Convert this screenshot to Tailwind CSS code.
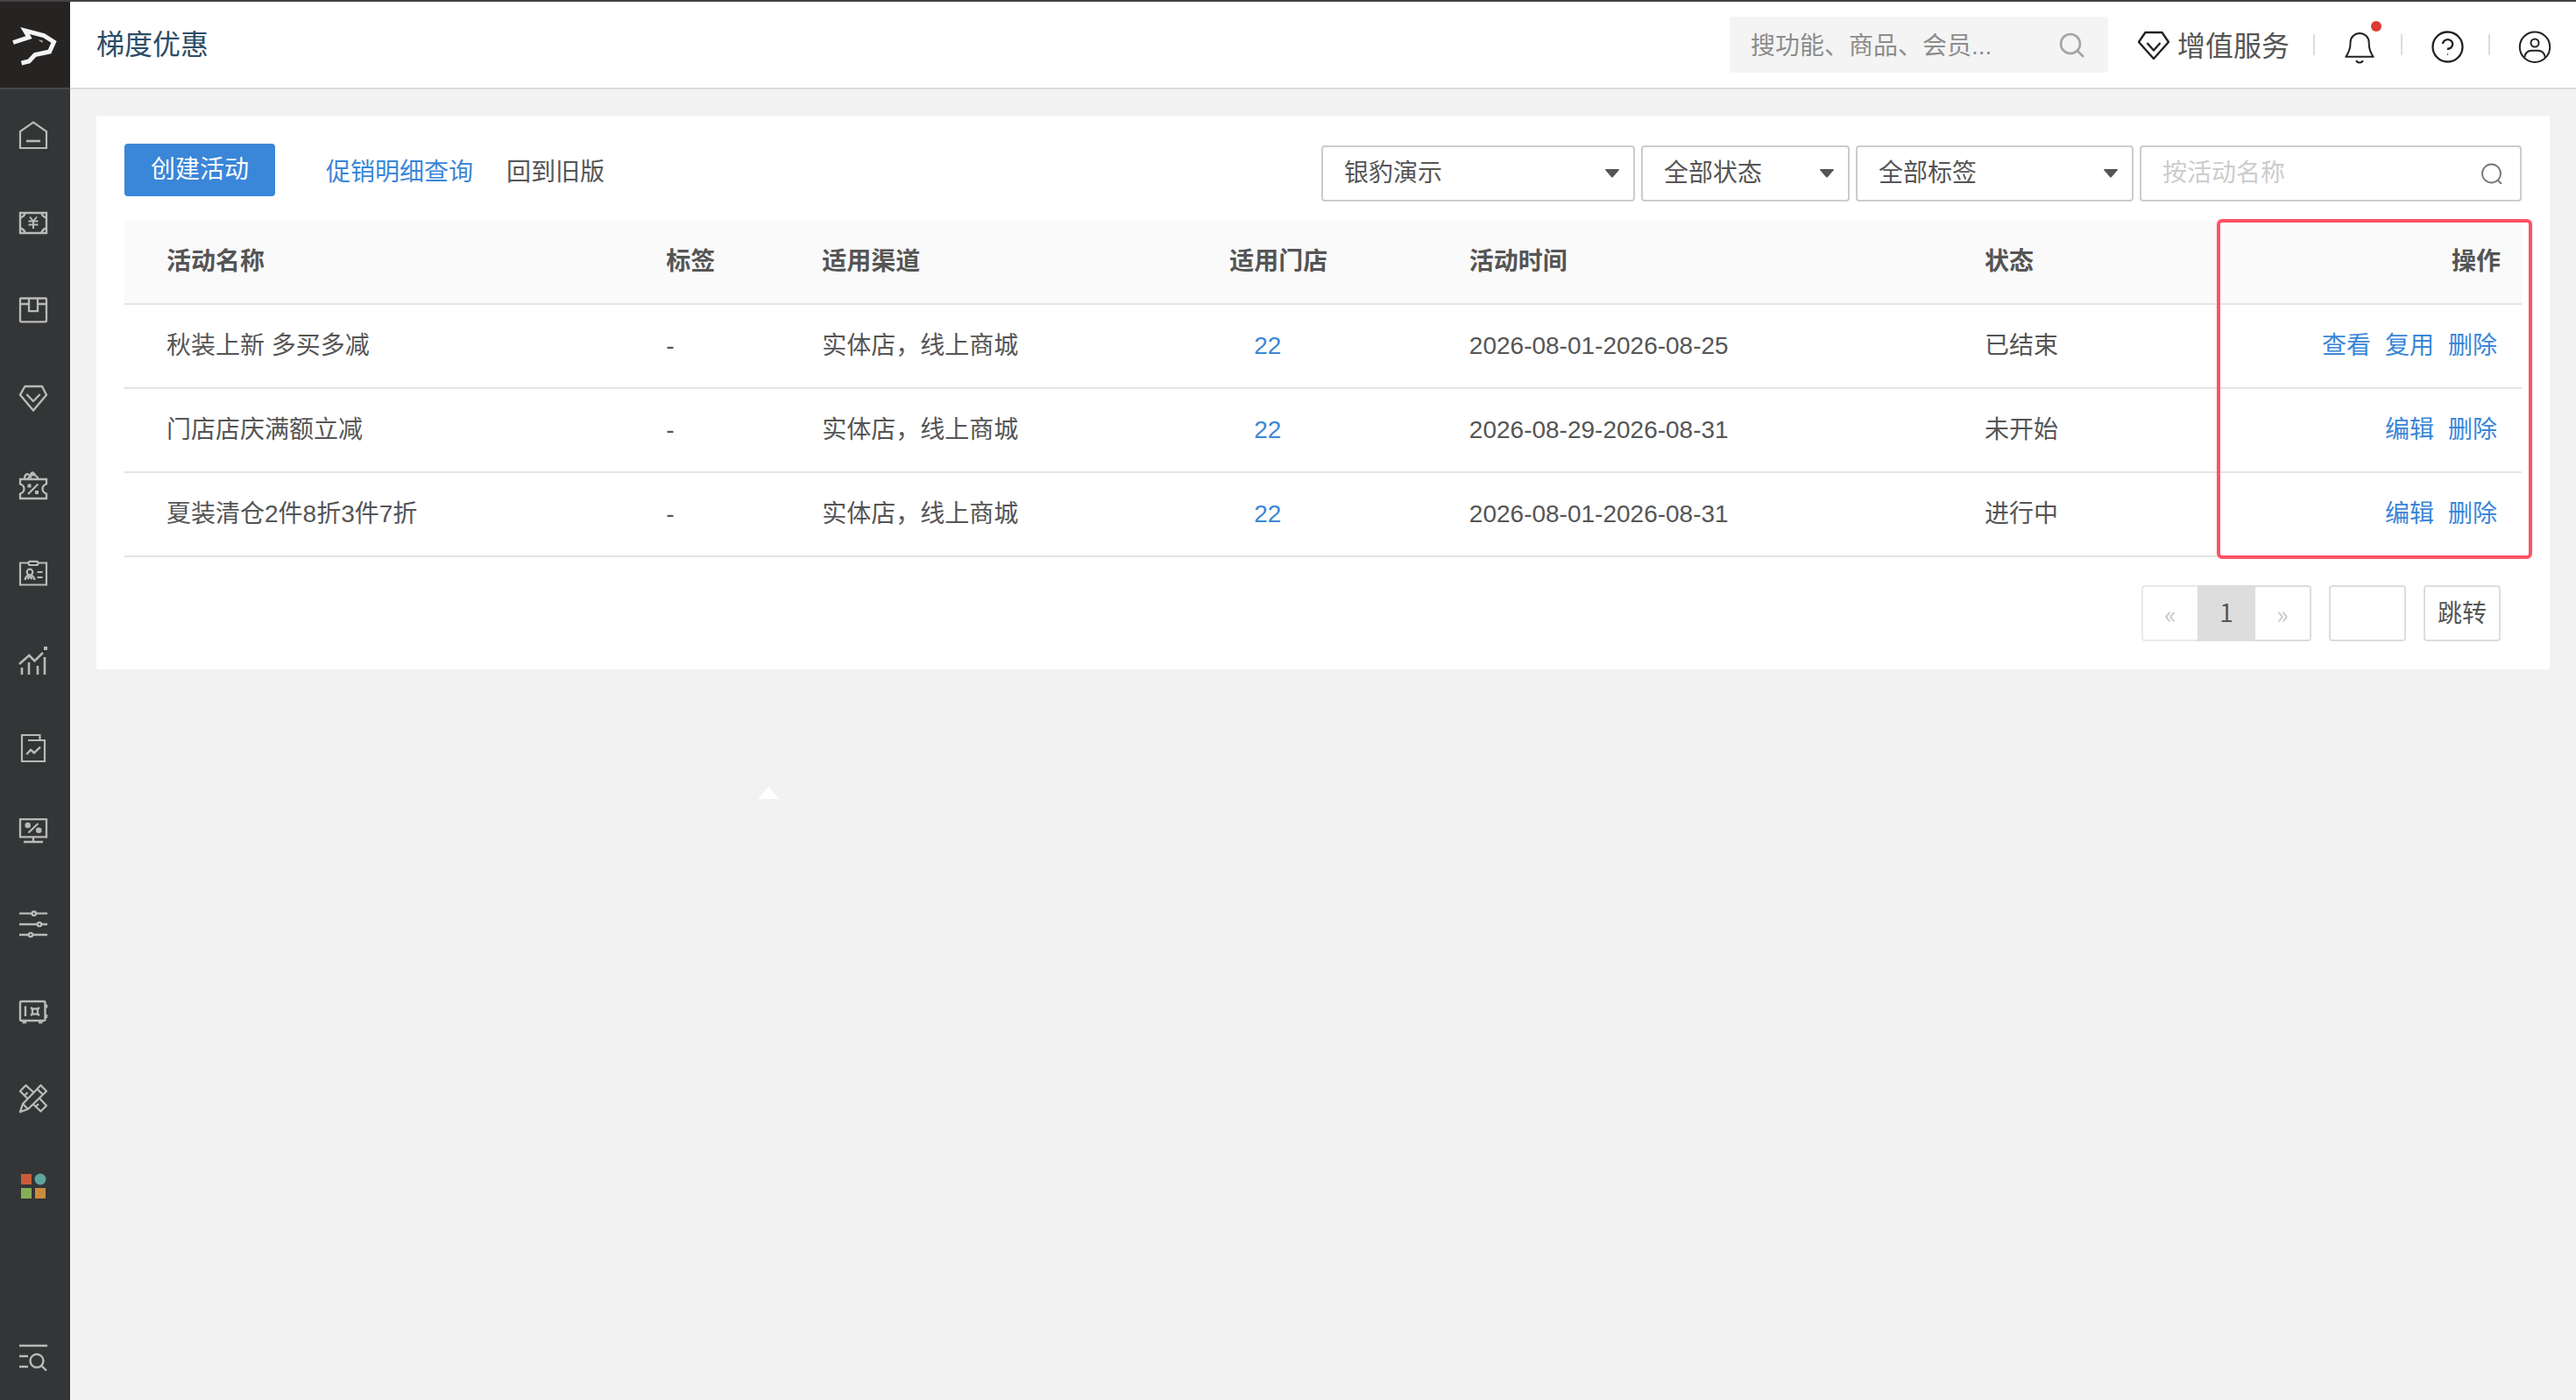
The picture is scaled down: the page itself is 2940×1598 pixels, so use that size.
<!DOCTYPE html>
<html lang="zh-CN">
<head>
  <meta charset="UTF-8">
  <meta name="viewport" content="width=device-width, initial-scale=1.0">
  <script src="https://cdn.jsdelivr.net/npm/@tailwindcss/browser@4"></script>
  <title>梯度优惠</title>
</head>
<body class="flex min-h-screen border-t-2 border-[#434142] bg-[#f2f2f2] font-['Liberation_Sans','Noto_Sans_CJK_SC',sans-serif] text-[28px] leading-[40px] text-[#555]">
  <!-- Sidebar -->
  <aside class="flex w-20 shrink-0 flex-col bg-[#343537]">
    <a href="#" aria-label="首页" class="block h-[100px] border-b-2 border-[#44484a] bg-[#262422]">
      <svg class="h-[98px] w-20" viewBox="0 2 80 98" fill="none" stroke="#f4f4f4" stroke-width="5">
        <path d="M15 48.500L33 42.500L28.500 35L50 40.500L61.500 48L56.500 59L40 62.500L33 70L24.500 72"/>
        <path d="M43.500 45.500l5 3.500v-3z" fill="#aaa" stroke="none"/>
      </svg>
    </a>
    <nav class="flex flex-col pt-[2px] pl-[18px]">
      <a href="#" aria-label="门店" class="flex h-[100px] items-center">
        <svg class="size-10" viewBox="0 0 40 40" fill="none" stroke="#b9bbb9" stroke-width="2.200">
          <path d="M5 35V16L20 5.500L35 16V35Z"/><path d="M12 27H28" stroke-width="2.600"/>
        </svg>
      </a>
      <a href="#" aria-label="收银" class="flex h-[100px] items-center">
        <svg class="size-10" viewBox="0 0 40 40" fill="none" stroke="#b9bbb9" stroke-width="2.400">
          <path d="M5 9H35V32H5Z"/>
          <path d="M10.500 9.500Q9.500 13.500 5 14.500M29.500 9.500Q30.500 13.500 35 14.500M10.500 31.500Q9.500 27.500 5 26.500M29.500 31.500Q30.500 27.500 35 26.500"/>
          <path d="M16 13.500L20 18.500L24 13.500M20 18.500V27M14.500 18.500H25.500M14.500 22.500H25.500" stroke-width="2"/>
        </svg>
      </a>
      <a href="#" aria-label="商品" class="flex h-[100px] items-center">
        <svg class="size-10" viewBox="0 0 40 40" fill="none" stroke="#b9bbb9" stroke-width="2.300">
          <rect x="5" y="6.500" width="30" height="26.800" rx="1"/>
          <path d="M5 13H15M25 13H35M15 6.500V21.200H25V6.500"/>
        </svg>
      </a>
      <a href="#" aria-label="会员" class="flex h-[100px] items-center">
        <svg class="size-10" viewBox="0 0 40 40" fill="none" stroke="#b9bbb9" stroke-width="2.400" stroke-linejoin="round">
          <path d="M10.500 7H30L35 16.700L20 34.500L5 16.700Z"/><path d="M12.300 16L20 24L27.700 16"/>
        </svg>
      </a>
      <a href="#" aria-label="营销" class="flex h-[100px] items-center">
        <svg class="size-10" viewBox="0 0 40 40" fill="none" stroke="#b9bbb9" stroke-width="2.300">
          <path d="M5 13H35V18.500Q30.500 20 30.500 24T35 29.500V35H5V29.500Q9.500 28 9.500 24T5 18.500Z"/>
          <path d="M10 12.500Q10 7.500 13.500 7Q15.500 7.500 17 10Q17 5.500 19.500 5.500Q22 7 22.500 9Q25 10 25.500 12.500M14 12Q17 7 21 8.500"/>
          <path d="M14 30L25.500 18.500"/>
          <rect x="13.500" y="18.500" width="4" height="4" fill="#b9bbb9" stroke="none"/><rect x="22" y="26" width="4" height="4" fill="#b9bbb9" stroke="none"/>
        </svg>
      </a>
      <a href="#" aria-label="员工" class="flex h-[100px] items-center">
        <svg class="size-10" viewBox="0 0 40 40" fill="none" stroke="#b9bbb9" stroke-width="2.200">
          <path d="M14 8.500H5V33.500H35V8.500H26"/>
          <rect x="14.500" y="6.800" width="11" height="4.200" rx="2"/>
          <circle cx="16" cy="19" r="3.300"/><path d="M10.500 28Q11 24 14.500 22.500M17.500 22.500Q21 24 21.500 28M13.500 27L16 23.500L18.500 27M24.500 19H30.500M24.500 25H30.500"/>
        </svg>
      </a>
      <a href="#" aria-label="数据" class="flex h-[100px] items-center">
        <svg class="size-10" viewBox="0 0 40 40" fill="none" stroke="#b9bbb9" stroke-width="2.600">
          <path d="M7 28V36M15 22V36M25 26V36M33 16V36M4 24L15.300 14L21.500 20.500L31 11"/>
          <rect x="32" y="4" width="4" height="4" fill="#b9bbb9" stroke="none"/>
        </svg>
      </a>
      <a href="#" aria-label="报表" class="flex h-[100px] items-center">
        <svg class="size-10" viewBox="0 0 40 40" fill="none" stroke="#b9bbb9" stroke-width="2.200">
          <path d="M14 11H33V35H7V5H27.500V11"/>
          <path d="M12.300 27L17 22L21 25.300L28 18.700" stroke-width="2.400"/>
        </svg>
      </a>
      <a href="#" aria-label="促销屏" class="flex h-[100px] items-center">
        <svg class="size-10" viewBox="0 0 40 40" fill="none" stroke="#b9bbb9" stroke-width="2.300">
          <path d="M5 1.200H35V21.300H5ZM20 21.500V27M9 27H31"/>
          <path d="M14.500 16.500L25.500 6"/>
          <circle cx="13.700" cy="8" r="3.300" fill="#b9bbb9" stroke="none"/><circle cx="26.300" cy="13.700" r="3.300" fill="#b9bbb9" stroke="none"/>
        </svg>
      </a>
      <a href="#" aria-label="设置" class="flex h-[100px] items-center">
        <svg class="size-10" viewBox="0 0 40 40" fill="#343537" stroke="#b9bbb9" stroke-width="2.300">
          <path d="M4 8.700H36M4 21H36M4 33H36"/>
          <circle cx="20.800" cy="8.700" r="2.200"/><circle cx="27" cy="21" r="2.200"/><circle cx="17" cy="33" r="2.200"/>
        </svg>
      </a>
      <a href="#" aria-label="钱柜" class="flex h-[100px] items-center">
        <svg class="size-10" viewBox="0 0 40 40" fill="none" stroke="#b9bbb9" stroke-width="2.400">
          <rect x="5" y="9" width="28.500" height="22" rx="1.500"/>
          <path d="M11 14.500V26M7.500 33H12M26 33H30.500M35 12.500V16.500M35 24V28"/>
          <rect x="19" y="17.500" width="6" height="6"/><path d="M17 16L19 17.500M27 16L25 17.500M17 25L19 23.500M27 25L25 23.500"/>
        </svg>
      </a>
      <a href="#" aria-label="工具" class="flex h-[100px] items-center">
        <svg class="size-10" viewBox="0 0 40 40" fill="none" stroke="#b9bbb9" stroke-width="2.300" stroke-linejoin="round">
          <path d="M28.500 4.800L35 11.500L14 32L5 35.200L8 26Z"/><path d="M8 26L14 32M24.500 9L31 15.500"/>
          <path d="M14 20.500L5 11.500L11.500 4.800L20.500 13M10.500 16L13.500 13M26.500 19L35 28L28.500 34.500L20 26.500M23 29L26 26"/>
        </svg>
      </a>
      <a href="#" aria-label="应用" class="flex h-[100px] items-center">
        <svg class="size-10" viewBox="0 0 40 40">
          <rect x="6" y="6" width="12" height="12" fill="#c95d39"/><circle cx="28" cy="12" r="6.500" fill="#5fa59a"/>
          <rect x="6" y="22" width="12" height="12" fill="#86af55"/><rect x="22" y="22" width="12" height="12" fill="#cc8b3c"/>
        </svg>
      </a>
    </nav>
    <button type="button" aria-label="搜索菜单" class="mt-auto mb-7 ml-[18px] size-10">
      <svg class="size-10" viewBox="0 0 40 40" fill="none" stroke="#b9bbb9" stroke-width="2.400">
        <path d="M4 6H36M4 18H14M4 30H14M29.500 29L35 34.500"/><circle cx="24" cy="23.300" r="7.500"/>
      </svg>
    </button>
  </aside>

  <div class="flex min-w-0 flex-1 flex-col">
    <!-- Top bar -->
    <header class="flex h-[100px] items-center border-b-2 border-[#dcdcdc] bg-white pl-[30px]">
      <h1 class="text-[32px] text-[#2c4c66]">梯度优惠</h1>
      <label class="ml-auto flex h-16 w-[432px] items-center rounded bg-[#f4f4f4] pr-[26px] pl-6">
        <input type="text" aria-label="全局搜索" placeholder="搜功能、商品、会员..." class="min-w-0 flex-1 pt-1 outline-none placeholder:text-[#8c8c8c]">
        <svg class="size-8" viewBox="0 0 32 32" fill="none" stroke="#a4a4a4" stroke-width="2.600">
          <circle cx="15" cy="15" r="11"/><path d="M23 23L30 30"/>
        </svg>
      </label>
      <a href="#" class="ml-[34px] flex items-center gap-[9px] pr-[27px] text-[32px]">
        <svg class="size-9" viewBox="0 0 36 36" fill="none" stroke="#222" stroke-width="2.400" stroke-linejoin="round">
          <path d="M8.500 4H27.500L35 15L18 34L1 15Z"/><path d="M10.500 16L18 24.500L25.500 16"/>
        </svg>
        <span class="pt-1">增值服务</span>
      </a>
      <span class="h-6 w-[2px] bg-[#dcdcdc]"></span>
      <button type="button" aria-label="消息" class="relative w-[98px] pl-[27px]">
        <svg class="size-12" viewBox="0 0 48 48" fill="none" stroke="#222" stroke-width="2">
          <path d="M8.500 37.700C11.500 33 13.500 28 13.500 23V21.500A10.600 10.600 0 0 1 34.700 21.500V23C34.700 28 36.500 33 39.500 37.700M7.500 37.700H40.500M20.300 42Q21 44.500 24 44.500T27.700 42"/>
        </svg>
        <span class="absolute -top-[3px] left-16 size-3 rounded-full bg-[#dc3a33]"></span>
      </button>
      <span class="h-6 w-[2px] bg-[#dcdcdc]"></span>
      <button type="button" aria-label="帮助" class="w-[98px] pl-[27px]">
        <svg class="size-12" viewBox="0 0 48 48" fill="none" stroke="#222" stroke-width="2.300">
          <circle cx="24.500" cy="26.500" r="17"/><path d="M19 23A5.600 5.300 0 1 1 24 28.700" stroke-width="2.400"/><circle cx="24.500" cy="35" r=".8" fill="#222" stroke="none"/>
        </svg>
      </button>
      <span class="h-6 w-[2px] bg-[#dcdcdc]"></span>
      <button type="button" aria-label="账号" class="w-[98px] pl-[27px]">
        <svg class="size-12" viewBox="0 0 48 48" fill="none" stroke="#222" stroke-width="2">
          <circle cx="24" cy="26.700" r="17.200"/><circle cx="24" cy="22" r="4.500"/><path d="M12.300 38.500C13 33 16.500 30.700 20.500 30.700H27.500C31.500 30.700 35 33 35.700 38.500"/>
        </svg>
      </button>
    </header>

    <main class="m-[30px] bg-white px-8 pb-8">
      <!-- Toolbar -->
      <div class="flex items-start pt-8 pb-[22px]">
        <button type="button" class="h-[60px] w-[172px] rounded bg-[#3a86d8] text-white">创建活动</button>
        <a href="#" class="mt-[13px] ml-[58px] text-[#3a86d8]">促销明细查询</a>
        <a href="#" class="mt-[13px] ml-[38px]">回到旧版</a>
        <form class="mt-[2px] ml-auto flex gap-[7px]">
          <label class="relative w-[358px]">
            <select aria-label="门店" class="h-16 w-full appearance-none rounded border-2 border-[#ccc] bg-white px-6">
              <option>银豹演示</option>
            </select>
            <svg class="pointer-events-none absolute top-[27px] right-[18px] h-[10px] w-4" viewBox="0 0 16 10" fill="#555"><path d="M1 0H15Q16.500 0 15.500 1.500L9 9Q8 10 7 9L.5 1.500Q-.5 0 1 0Z"/></svg>
          </label>
          <label class="relative w-[238px]">
            <select aria-label="状态" class="h-16 w-full appearance-none rounded border-2 border-[#ccc] bg-white px-6">
              <option>全部状态</option>
            </select>
            <svg class="pointer-events-none absolute top-[27px] right-[18px] h-[10px] w-4" viewBox="0 0 16 10" fill="#555"><path d="M1 0H15Q16.500 0 15.500 1.500L9 9Q8 10 7 9L.5 1.500Q-.5 0 1 0Z"/></svg>
          </label>
          <label class="relative w-[317px]">
            <select aria-label="标签" class="h-16 w-full appearance-none rounded border-2 border-[#ccc] bg-white px-6">
              <option>全部标签</option>
            </select>
            <svg class="pointer-events-none absolute top-[27px] right-[18px] h-[10px] w-4" viewBox="0 0 16 10" fill="#555"><path d="M1 0H15Q16.500 0 15.500 1.500L9 9Q8 10 7 9L.5 1.500Q-.5 0 1 0Z"/></svg>
          </label>
          <label class="flex h-16 w-[436px] items-center rounded border-2 border-[#ccc] pr-5 pl-6">
            <input type="text" aria-label="活动名称" placeholder="按活动名称" class="min-w-0 flex-1 outline-none placeholder:text-[#ccc]">
            <svg class="size-6" viewBox="0 0 24 24" fill="none" stroke="#777" stroke-width="1.900">
              <circle cx="11.500" cy="12" r="10.500"/><path d="M18.500 19.500L23 24"/>
            </svg>
          </label>
        </form>
      </div>

      <!-- Activity list -->
      <div class="relative">
        <table class="w-full table-fixed border-separate border-spacing-0 text-left [&_td]:h-24 [&_td]:border-b-2 [&_td]:border-[#e4e4e4] [&_th]:h-24 [&_th]:border-b-2 [&_th]:border-[#e4e4e4]">
          <thead>
            <tr class="bg-[#fafafa]">
              <th class="w-[22.6%] pl-12">活动名称</th>
              <th class="w-[6.5%]">标签</th>
              <th class="w-[17%]">适用渠道</th>
              <th class="w-[10%]">适用门店</th>
              <th class="w-[21.5%]">活动时间</th>
              <th>状态</th>
              <th class="pr-6 text-right">操作</th>
            </tr>
          </thead>
          <tbody>
            <tr>
              <td class="pl-12">秋装上新 多买多减</td>
              <td>-</td>
              <td>实体店，线上商城</td>
              <td class="pl-7"><a href="#" class="text-[#3a86d8]">22</a></td>
              <td>2026-08-01-2026-08-25</td>
              <td>已结束</td>
              <td class="pr-7">
                <div class="flex justify-end gap-4 text-[#3a86d8]"><a href="#">查看</a><a href="#">复用</a><a href="#">删除</a></div>
              </td>
            </tr>
            <tr>
              <td class="pl-12">门店店庆满额立减</td>
              <td>-</td>
              <td>实体店，线上商城</td>
              <td class="pl-7"><a href="#" class="text-[#3a86d8]">22</a></td>
              <td>2026-08-29-2026-08-31</td>
              <td>未开始</td>
              <td class="pr-7">
                <div class="flex justify-end gap-4 text-[#3a86d8]"><a href="#">编辑</a><a href="#">删除</a></div>
              </td>
            </tr>
            <tr>
              <td class="pl-12">夏装清仓2件8折3件7折</td>
              <td>-</td>
              <td>实体店，线上商城</td>
              <td class="pl-7"><a href="#" class="text-[#3a86d8]">22</a></td>
              <td>2026-08-01-2026-08-31</td>
              <td>进行中</td>
              <td class="pr-7">
                <div class="flex justify-end gap-4 text-[#3a86d8]"><a href="#">编辑</a><a href="#">删除</a></div>
              </td>
            </tr>
          </tbody>
        </table>
        <!-- Marker around the action column -->
        <div class="pointer-events-none absolute -top-[2px] -right-3 -bottom-[2px] w-[360px] rounded-md border-4 border-[#ff5265]"></div>
      </div>

      <!-- Pagination -->
      <div class="mt-8 flex h-16 justify-end gap-5 pr-6 font-['Noto_Sans_CJK_SC',sans-serif]">
        <nav aria-label="分页" class="flex">
          <button type="button" class="w-16 rounded-l border-2 border-r-0 border-[#e9e9e9] text-[#c8c8c8]">«</button>
          <button type="button" aria-current="page" class="w-[66px] bg-[#ddd] pb-1">1</button>
          <button type="button" class="w-16 rounded-r border-2 border-l-0 border-[#ddd] text-[#c8c8c8]">»</button>
        </nav>
        <input type="text" aria-label="页码" class="w-[88px] rounded border-2 border-[#ddd] px-2 text-center outline-none">
        <button type="button" class="w-[88px] rounded border-2 border-[#ddd] pb-1">跳转</button>
      </div>
    </main>
  </div>

  <!-- Popover arrow -->
  <svg class="absolute top-[898px] left-[865px] h-[14px] w-6" viewBox="0 0 24 14" fill="#fff"><path d="M12 0L24 14H0Z"/></svg>
</body>
</html>
